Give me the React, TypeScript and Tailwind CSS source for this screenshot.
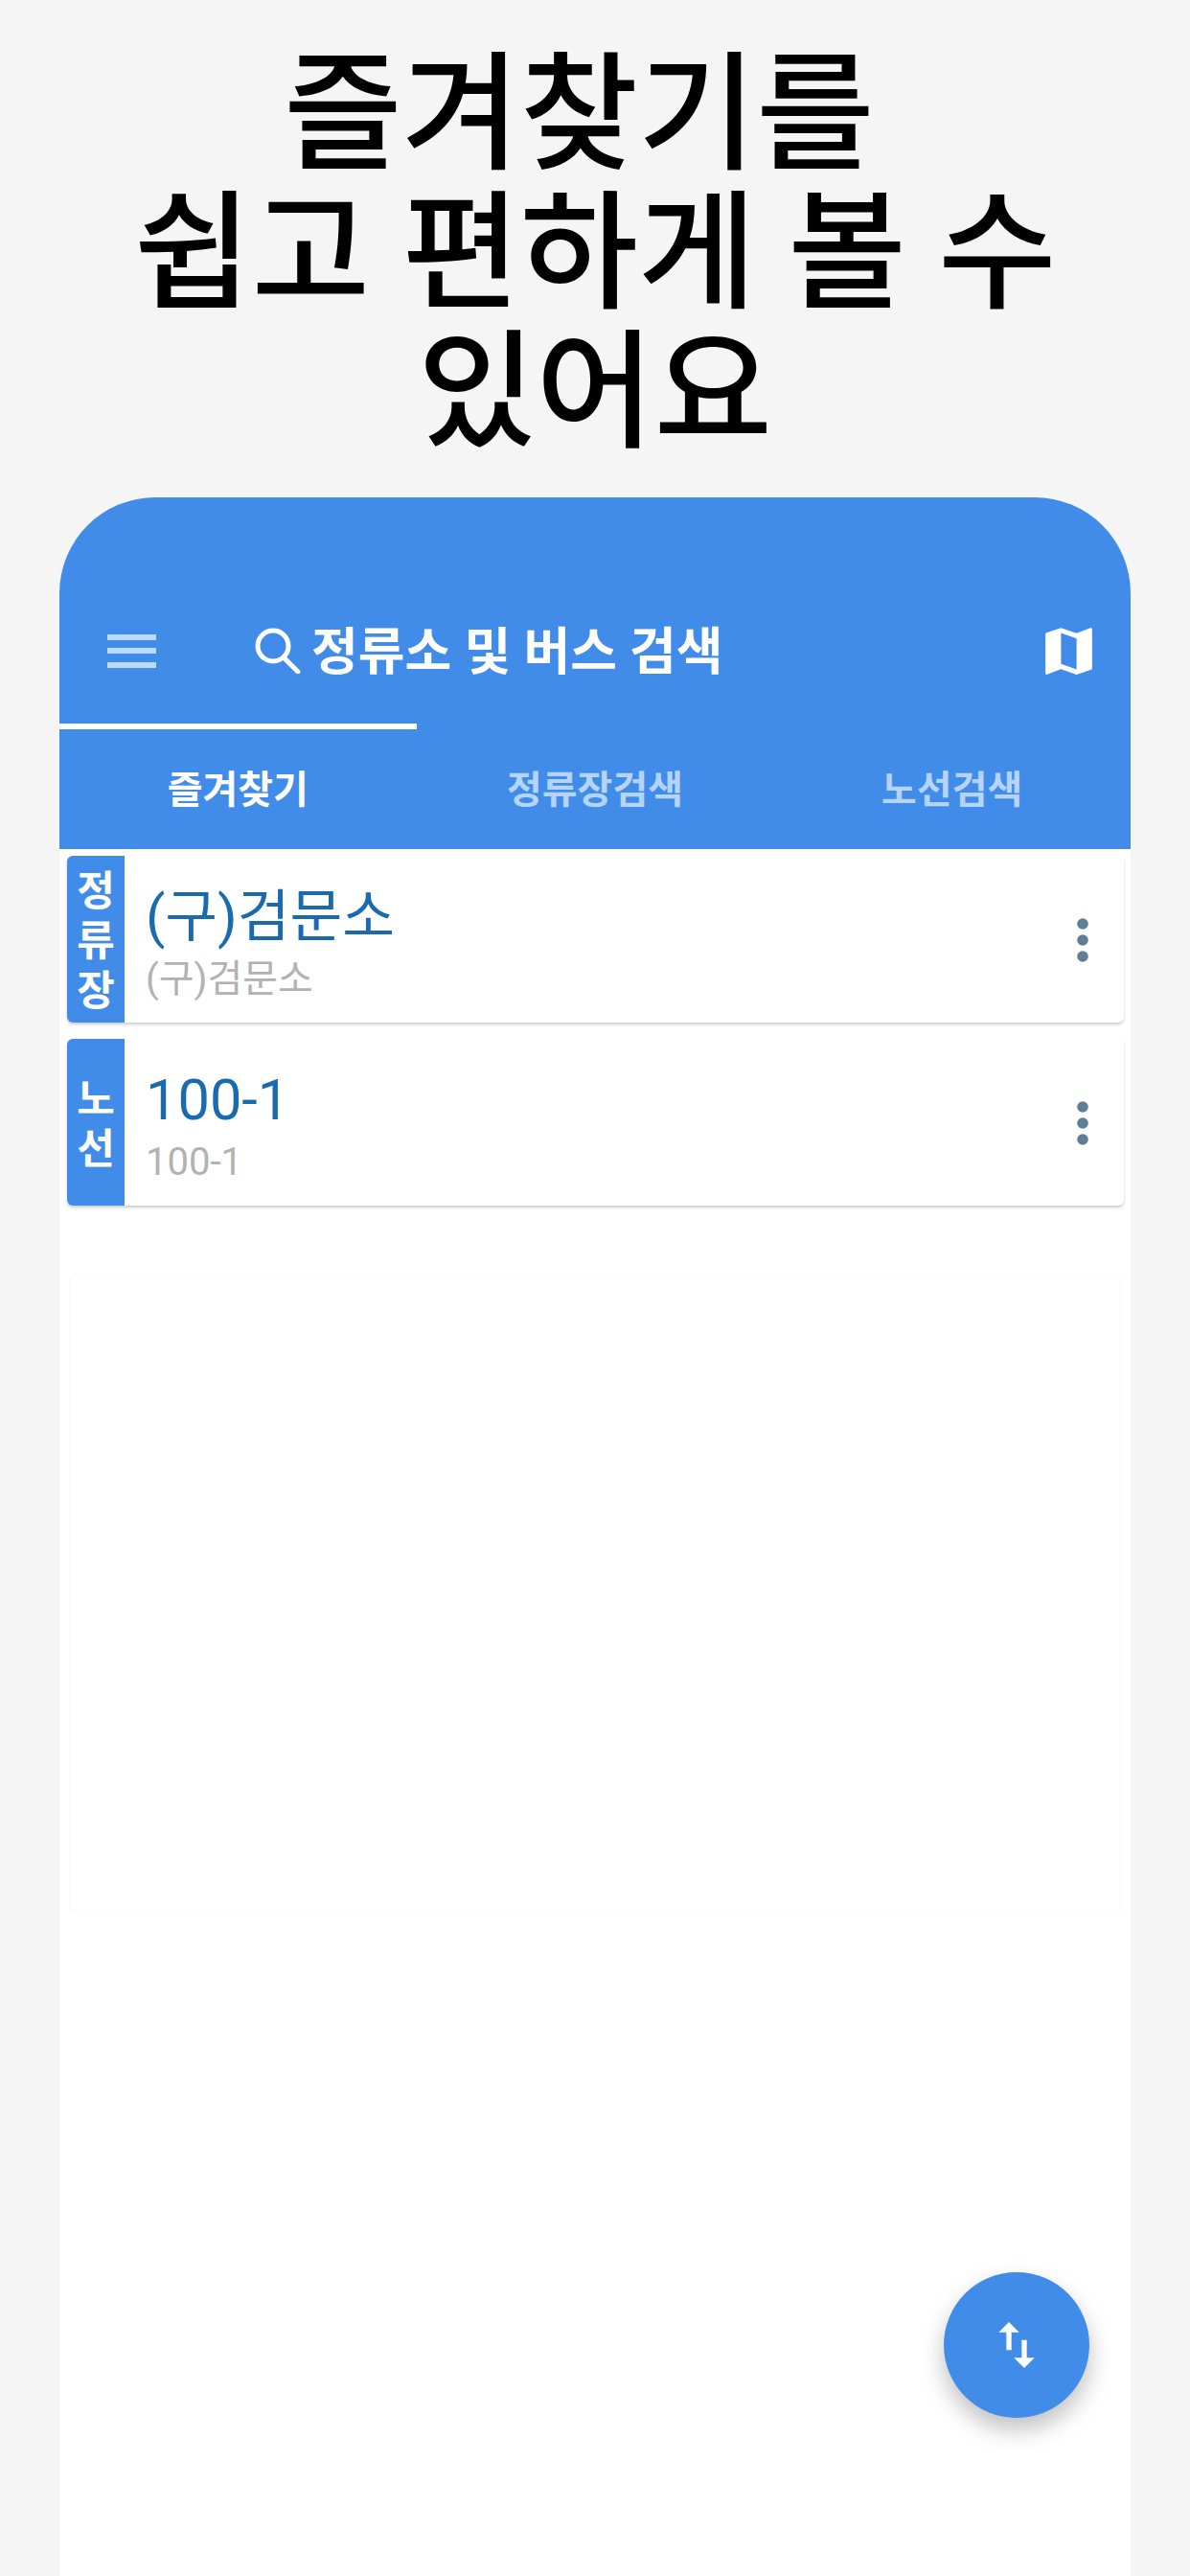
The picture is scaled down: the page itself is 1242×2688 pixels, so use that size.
const font = "font-['Roboto','Noto_Sans_CJK_KR',sans-serif]";

function StopCard({ tag, title, sub }: { tag: string[]; title: string; sub: string }) {
  return (
    <div className="flex h-[174px] rounded-[6px] bg-white shadow-[0_2px_3px_rgba(0,0,0,0.2)]">
      {/* Type badge */}
      <div className="flex w-[60px] shrink-0 flex-col items-center justify-center rounded-l-[6px] bg-[#418ce9] pt-[4px] text-[43px] leading-[52px] font-bold text-white">
        {tag.map((t) => (
          <span key={t}>{t}</span>
        ))}
      </div>
      <div className="flex flex-1 flex-col pt-[28px] pl-[22px]">
        <div className="text-[59.5px] leading-[72px] text-[#1a6ab0]">{title}</div>
        <div className="mt-[4px] text-[40px] leading-[50px] text-[#b2b2b2]">{sub}</div>
      </div>
      <div className="flex w-[90px] items-center justify-center pt-[2px] pl-[4px]">
        <svg className="w-[14px] h-[46px] text-[#5f7f97]" viewBox="0 0 14 46" fill="currentColor">
          <circle cx="7" cy="6" r="5.8" />
          <circle cx="7" cy="23" r="5.8" />
          <circle cx="7" cy="40" r="5.8" />
        </svg>
      </div>
    </div>
  );
}

export default function App() {
  return (
    <div className={`flex h-[2688px] flex-col overflow-hidden bg-[#f5f5f5] ${font}`}>
      {/* Headline */}
      <h1 className="h-[519px] shrink-0 pt-[48px] text-center text-[134px] leading-[145px] font-medium text-black">
        즐겨찾기를&nbsp;
        <br />
        쉽고 편하게 볼 수
        <br />
        있어요
      </h1>

      {/* Phone panel */}
      <div className="relative mx-[62px] flex flex-1 flex-col bg-white rounded-t-[100px]">
        <div className="h-[367px] shrink-0 rounded-t-[100px] bg-[#418ce9] flex flex-col">
          <div className="flex h-[236px] shrink-0 items-center pt-[84px] pr-[32px] pl-[50px]">
            <div className="flex w-[51px] flex-col gap-[8.5px]">
              <div className="h-[6px] bg-[#bcdcff]" />
              <div className="h-[6px] bg-[#bcdcff]" />
              <div className="h-[6px] bg-[#bcdcff]" />
            </div>
            <svg className="ml-[103px] w-[48px] h-[48px]" viewBox="0 0 48 48" fill="none" stroke="white" strokeWidth="5">
              <circle cx="19" cy="19" r="16" />
              <path d="M30 31 L45 46" strokeLinecap="round" />
            </svg>
            <span className="ml-[11px] mt-[5px] text-[53px] font-bold text-white whitespace-nowrap">정류소 및 버스 검색</span>
            <svg className="ml-auto w-[65px] h-[65px]" viewBox="0 0 24 24" fill="white">
              <path d="M20.5 3l-.16.03L15 5.1 9 3 3.36 4.9c-.21.07-.36.25-.36.48V20.5c0 .28.22.5.5.5l.16-.03L9 18.9l6 2.1 5.64-1.9c.21-.07.36-.25.36-.48V3.5c0-.28-.22-.5-.5-.5zM15 19l-6-2.11V5l6 2.11V19z" />
            </svg>
          </div>
          {/* Tabs */}
          <div className="h-[6px] w-[373px] shrink-0 bg-white" />
          <div className="grid flex-1 grid-cols-3 items-center pt-[2px] text-center text-[40px] font-bold text-[#b5d4fb]">
            <span className="text-white">즐겨찾기</span>
            <span>정류장검색</span>
            <span>노선검색</span>
          </div>
        </div>

        <div className="flex flex-col gap-[17px] pt-[7px] pr-[7px] pl-[8px]">
          <StopCard tag={["정", "류", "장"]} title="(구)검문소" sub="(구)검문소" />
          <StopCard tag={["노", "선"]} title="100-1" sub="100-1" />
        </div>

        {/* Empty list placeholder, barely visible */}
        <div className="mx-[10px] mt-[71px] h-[665px] rounded-t-[8px] border border-[#fafafa]" />

        <button className="absolute top-[1852px] right-[43px] flex h-[152px] w-[152px] items-center justify-center rounded-full bg-[#418ce9] shadow-[0_12px_24px_rgba(0,0,0,0.25)]">
          <svg className="w-[64px] h-[64px]" viewBox="0 0 24 24" fill="white">
            <path d="M16 17.01V10h-2v7.01h-3L15 21l4-3.99h-3zM9 3L5 6.99h3V14h2V6.99h3L9 3z" />
          </svg>
        </button>
      </div>
    </div>
  );
}
